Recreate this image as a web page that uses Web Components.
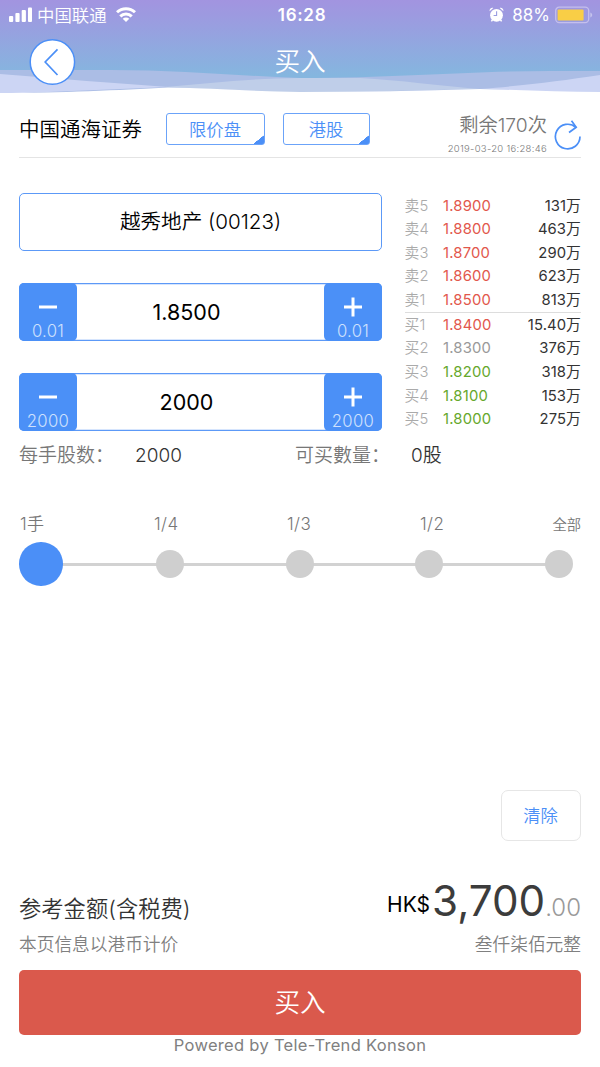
<!DOCTYPE html>
<html lang="zh-CN">
<head>
<meta charset="utf-8">
<meta name="viewport" content="width=device-width, initial-scale=1">
<title>买入</title>
<style>
	body{
		margin: 0;
		background: #fff;
		font-family: Inter, "Noto Sans CJK SC", sans-serif;
		font-weight: 350;
	}
</style>
</head>
<body>
<trade-app></trade-app>

<template id="status_bar_tpl">
	<style>
		:host{
			display: grid;
			grid-template-columns: 1fr auto 1fr;
			align-items: center;
			height: 30px;
			padding: 0 7px 0 9px;
			color: #fff;
			font-size: 17px;
			line-height: 30px;
			box-sizing: border-box;
		}
		.side{
			display: flex;
			align-items: center;
			height: 30px;
		}
		.right{
			justify-content: flex-end;
		}
		.carrier{
			margin: 1px 9px 0 5px;
			font-size: 17.4px;
		}
		.time{
			font-weight: 600;
			letter-spacing: .7px;
			margin-left: 2px;
		}
		.level{
			margin: 0 5px 0 8px;
			font-weight: 400;
		}
		svg{
			display: block;
		}
	</style>
	<div class="side">
		<svg width="23" height="16" fill="#fff">
			<rect x="0" y="9" width="4.2" height="6" rx="1"/>
			<rect x="6.4" y="6" width="4.2" height="9" rx="1"/>
			<rect x="12.7" y="3" width="4.2" height="12" rx="1"/>
			<rect x="19" y="0.5" width="4" height="14.5" rx="1"/>
		</svg>
		<span class="carrier">中国联通</span>
		<svg width="20" height="16" fill="none" stroke="#fff" stroke-width="3">
			<path d="M1 5.3C6 0.4 14 0.4 19 5.3"/>
			<path d="M4.3 9.4C7.4 6.2 12.6 6.2 15.7 9.4"/>
			<path d="M10 15L6.7 11.8C8.6 10.1 11.4 10.1 13.3 11.8Z" fill="#fff" stroke="none"/>
		</svg>
	</div>
	<span class="time">16:28</span>
	<div class="side right">
		<svg width="15" height="16">
			<circle cx="7.5" cy="8.3" r="6.4" fill="#fff"/>
			<path d="M0.6 4.2C0.3 1.8 2.2 0.3 4.3 0.9ZM14.4 4.2C14.7 1.8 12.8 0.3 10.7 0.9Z" fill="#fff"/>
			<path d="M3.6 12.6L2.4 14.4M11.4 12.6L12.6 14.4" stroke="#fff" stroke-width="1.5"/>
			<path d="M7.6 4.2V8.5H4.6" stroke="#9a9de0" stroke-width="1.1" fill="none"/>
		</svg>
		<span class="level">88%</span>
		<svg width="38" height="18">
			<rect x="0.7" y="1.2" width="33" height="15.4" rx="3.5" fill="none" stroke="#c5bfed" stroke-width="1.3"/>
			<rect x="2.6" y="3.4" width="26" height="11" rx="1" fill="#f9ce46"/>
			<path d="M35.3 6.5C37.8 7.2 37.8 10.8 35.3 11.5Z" fill="#c5c3ec"/>
		</svg>
	</div>
</template>

<template id="nav_header_tpl">
	<style>
		:host{
			display: block;
			height: 94px;
			position: relative;
			background: linear-gradient(#a294e0 0, #9b9ce0 20px, #85b6df 76px);
		}
		.waves{
			position: absolute;
			left: 0;
			top: 0;
		}
		.bar{
			display: grid;
			grid-template-columns: 46px 1fr 46px;
			align-items: center;
			height: 46px;
			margin-top: 8px;
			padding: 0 29px;
			position: relative;
		}
		status-bar{
			position: relative;
		}
		.back{
			display: block;
		}
		h1{
			margin: 0;
			color: #fff;
			text-align: center;
			font-size: 25.6px;
			font-weight: 350;
			line-height: 48px;
		}
	</style>
	<svg class="waves" width="600" height="94">
		<path d="M0 70H110C180 70 240 76 300 78C380 80 430 86 480 89L600 93V94H0Z" fill="#abbde5"/>
		<path d="M600 71H550C470 71 400 78 300 78C250 79 210 83 165 87L0 93V94H600Z" fill="#abbde5"/>
		<path d="M165 87C210 83 250 78.5 300 78H360C400 80 440 86 480 89L300 93Z" fill="#bfcee9"/>
		<path d="M0 74C60 79 115 83 168 87L0 94Z" fill="#ccd5f4"/>
		<path d="M600 75C560 81 530 85 480 89L600 94Z" fill="#ccd5f4"/>
		<path d="M0 93C60 93 120 90 168 87.5C210 88 255 91.5 300 92C360 92 420 91 480 89C520 90 560 92 600 92V94H0Z" fill="#fff"/>
	</svg>
	<status-bar></status-bar>
	<div class="bar">
		<svg class="back" width="47" height="46" fill="none" stroke="#4b8ff7">
			<circle cx="23.4" cy="23" r="22.2" fill="#fff" stroke-width="1.5"/>
			<path d="M28.5 10.3L16.2 23L28.5 36" stroke-width="1.7"/>
		</svg>
		<h1><slot></slot></h1>
	</div>
</template>

<template id="select_box_tpl">
	<style>
		:host{
			display: block;
			height: 32px;
			border: 1px solid #6ba3f9;
			border-radius: 3px;
			box-sizing: border-box;
			padding-right: 1px;
			color: #4b8ff7;
			background: linear-gradient(141deg, transparent 50%, #4b8ff7 52%) right bottom / 11px 9px no-repeat;
			font-size: 17.3px;
			line-height: 32px;
			text-align: center;
		}
	</style>
	<slot></slot>
</template>

<template id="step_input_tpl">
	<style>
		:host{
			display: grid;
			grid-template-columns: 58px 1fr 58px;
			height: 58px;
			border-radius: 5px;
			box-shadow: inset 0 0 0 1.3px #5c99f7;
		}
		.btn{
			display: flex;
			flex-direction: column;
			align-items: center;
			justify-content: flex-end;
			border-radius: 5px;
			background: #4b90f7;
			color: #cfe1fd;
			font-size: 16.7px;
			line-height: 18px;
			letter-spacing: .3px;
			padding-bottom: 1px;
			box-sizing: border-box;
		}
		svg{
			margin-bottom: 5px;
		}
		.value{
			padding-right: 28px;
			font-size: 21.5px;
			font-weight: 370;
			line-height: 58px;
			text-align: center;
			color: #000;
		}
	</style>
	<div class="btn">
		<svg width="20" height="20"><path d="M1 10H19" stroke="#fff" stroke-width="3"/></svg>
		<span class="step"></span>
	</div>
	<div class="value"><slot></slot></div>
	<div class="btn">
		<svg width="20" height="20"><path d="M1 10H19M10 0.5V19.5" stroke="#fff" stroke-width="3"/></svg>
		<span class="step"></span>
	</div>
</template>

<template id="quote_row_tpl">
	<style>
		:host{
			display: grid;
			grid-template-columns: 38.5px 1fr auto;
			height: 23.6px;
			line-height: 23.6px;
			font-size: 14.8px;
			color: #e2574c;
		}
		:host([trend="flat"]){ color: #999; }
		:host([trend="down"]){ color: #66a82c; }
		.label{ color: #aaa; }
		.price{ font-weight: 380; }
		.label, .price{ letter-spacing: .2px; }
		.amount{
			color: #333;
			font-weight: 370;
			letter-spacing: .1px;
		}
	</style>
	<span class="label"></span>
	<span class="price"></span>
	<span class="amount"></span>
</template>

<template id="lot_slider_tpl">
	<style>
		:host{
			display: block;
		}
		.labels{
			display: grid;
			grid-template-columns: 134px 133px 133px 1fr auto;
			align-items: center;
			height: 24px;
			padding-left: 1px;
			color: #777;
			font-size: 17px;
			letter-spacing: .4px;
			line-height: 24px;
		}
		.labels :last-child{
			font-size: 14.3px;
			letter-spacing: 0;
			padding-top: 2px;
		}
		.track{
			display: flex;
			align-items: center;
			justify-content: space-between;
			height: 44px;
			margin-top: 7px;
			padding-right: 8px;
			background: linear-gradient(#d2d2d2, #d2d2d2) 20px 50% / 520px 3px no-repeat;
		}
		.dot{
			width: 28px;
			height: 28px;
			border-radius: 50%;
			background: #cfcfcf;
		}
		.dot.on{
			width: 43.5px;
			height: 43.5px;
			margin-right: -8px;
			background: #4b8ff7;
		}
	</style>
	<div class="labels"></div>
	<div class="track"></div>
</template>

<template id="trade_app_tpl">
	<style>
		:host{
			display: block;
			width: 600px;
			height: 1067px;
			overflow: hidden;
		}
		main{
			padding: 0 19px;
		}
		.account{
			display: flex;
			align-items: flex-start;
			height: 64px;
			border-bottom: 1px solid #e4e4e4;
			box-sizing: border-box;
		}
		.broker{
			width: 147px;
			font-size: 20.5px;
			line-height: 32px;
			margin-top: 20px;
			color: #000;
		}
		select-box{
			margin-top: 19px;
		}
		.remain{
			margin-left: auto;
			margin-top: 18px;
			text-align: right;
			color: #777;
			line-height: 26px;
			font-size: 19.3px;
		}
		.date{
			font-size: 9.5px;
			line-height: 12px;
			margin-top: 5px;
			letter-spacing: .3px;
		}
		.reload{
			margin: 24px 0 0 7px;
		}
		.order{
			display: grid;
			grid-template-columns: 363px 176.5px;
			justify-content: space-between;
			height: 238px;
			margin-top: 35px;
		}
		.stock{
			height: 58px;
			border: 1.3px solid #5c99f7;
			border-radius: 5px;
			box-sizing: border-box;
			font-size: 20.6px;
			line-height: 56px;
			text-align: center;
			color: #000;
		}
		step-input{
			margin-top: 32px;
		}
		.book{
			padding-top: 1px;
		}
		.sell{
			padding-top: .6px;
			border-bottom: 1px solid #ddd;
			height: 117px;
		}
		.buy{
			padding-top: 1.2px;
		}
		.lots{
			display: grid;
			grid-template-columns: 116px 160px 116px auto;
			justify-content: start;
			height: 30px;
			color: #777;
			font-size: 19px;
			line-height: 30px;
			margin-top: 10px;
		}
		.lots b{
			color: #333;
			font-weight: 350;
		}
		lot-slider{
			margin-top: 40px;
		}
		.clear{
			display: block;
			width: 80px;
			height: 51px;
			margin: 204px 0 0 auto;
			border: 1px solid #e6e6e6;
			border-radius: 7px;
			box-sizing: border-box;
			padding-right: 1px;
			color: #4b8ff7;
			font-size: 17.3px;
			line-height: 50px;
			text-align: center;
		}
		.total{
			display: flex;
			justify-content: space-between;
			align-items: baseline;
			height: 56px;
			margin-top: 32px;
			line-height: 56px;
		}
		.caption{
			font-size: 22.3px;
			color: #333;
			position: relative;
			top: 1px;
		}
		.sum{
			display: flex;
			align-items: baseline;
			color: #3c3c3c;
			font-size: 42.2px;
			font-weight: 380;
		}
		.cur{
			font-size: 21px;
			color: #000;
			margin-right: 2px;
			position: relative;
			top: -4px;
		}
		.cents{
			font-size: 24px;
			color: #999;
			font-weight: 320;
		}
		.notes{
			display: flex;
			justify-content: space-between;
			margin-top: 3px;
			color: #808080;
			font-size: 17.7px;
			line-height: 26px;
		}
		.submit{
			height: 65px;
			margin-top: 12px;
			border-radius: 5px;
			background: #da594c;
			color: #fff;
			font-size: 25.6px;
			line-height: 65px;
			text-align: center;
		}
		footer{
			color: #808080;
			font-size: 16.5px;
			font-weight: 400;
			letter-spacing: .3px;
			line-height: 20px;
			text-align: center;
		}
	</style>
	<nav-header>买入</nav-header>
	<main>
		<div class="account">
			<div class="broker">中国通海证券</div>
			<select-box style="width:99px">限价盘</select-box>
			<select-box style="width:87px;margin-left:18px">港股</select-box>
			<div class="remain">
				<div>剩余170次</div>
				<div class="date">2019-03-20 16:28:46</div>
			</div>
			<svg class="reload" width="27" height="33" fill="none" stroke="#4b8ff7" stroke-width="1.7">
				<path d="M26 18.5A12.3 12.3 0 1 1 22 9.5"/>
				<path d="M17.5 2.8L22.2 9.3L15 14.5"/>
			</svg>
		</div>
		<div class="order">
			<div>
				<div class="stock">越秀地产 (00123)</div>
				<step-input step="0.01">1.8500</step-input>
				<step-input step="2000">2000</step-input>
			</div>
			<div class="book">
				<div class="sell">
					<quote-row label="卖5" price="1.8900" amount="131万"></quote-row>
					<quote-row label="卖4" price="1.8800" amount="463万"></quote-row>
					<quote-row label="卖3" price="1.8700" amount="290万"></quote-row>
					<quote-row label="卖2" price="1.8600" amount="623万"></quote-row>
					<quote-row label="卖1" price="1.8500" amount="813万"></quote-row>
				</div>
				<div class="buy">
					<quote-row label="买1" price="1.8400" amount="15.40万"></quote-row>
					<quote-row label="买2" price="1.8300" amount="376万" trend="flat"></quote-row>
					<quote-row label="买3" price="1.8200" amount="318万" trend="down"></quote-row>
					<quote-row label="买4" price="1.8100" amount="153万" trend="down"></quote-row>
					<quote-row label="买5" price="1.8000" amount="275万" trend="down"></quote-row>
				</div>
			</div>
		</div>
		<div class="lots">
			<span>每手股数：</span><b>2000</b>
			<span>可买數量：</span><b>0股</b>
		</div>
		<lot-slider stops="1手,1/4,1/3,1/2,全部" selected="0"></lot-slider>
		<div class="clear">清除</div>
		<div class="total">
			<span class="caption">参考金额(含税费)</span>
			<div class="sum"><span class="cur">HK$</span><span>3,700</span><span class="cents">.00</span></div>
		</div>
		<div class="notes">
			<span>本页信息以港币计价</span>
			<span>叁仟柒佰元整</span>
		</div>
		<div class="submit">买入</div>
		<footer>Powered by Tele-Trend Konson</footer>
	</main>
</template>

<script>
	(function(){
		'use strict';

		class BaseElement extends HTMLElement {
			constructor(tplId){
				super();
				const shadow = this.attachShadow({mode:'open'});
				const tpl = document.getElementById(tplId);
				shadow.appendChild(document.importNode(tpl.content, true));
			}
		}

		class StatusBar extends BaseElement {
			constructor(){ super('status_bar_tpl'); }
		}

		class NavHeader extends BaseElement {
			constructor(){ super('nav_header_tpl'); }
		}

		class SelectBox extends BaseElement {
			constructor(){ super('select_box_tpl'); }
		}

		class StepInput extends BaseElement {
			constructor(){ super('step_input_tpl'); }

			connectedCallback(){
				this.shadowRoot.querySelectorAll('.step').forEach((el) => {
					el.textContent = this.getAttribute('step');
				});
			}
		}

		class QuoteRow extends BaseElement {
			constructor(){ super('quote_row_tpl'); }

			connectedCallback(){
				['label', 'price', 'amount'].forEach((name) => {
					this.shadowRoot.querySelector('.' + name).textContent = this.getAttribute(name);
				});
			}
		}

		class LotSlider extends BaseElement {
			constructor(){ super('lot_slider_tpl'); }

			connectedCallback(){
				const labels = this.shadowRoot.querySelector('.labels');
				const track = this.shadowRoot.querySelector('.track');
				const selected = Number(this.getAttribute('selected'));

				this.getAttribute('stops').split(',').forEach((text, i) => {
					const label = document.createElement('span');
					label.textContent = text;
					labels.appendChild(label);

					const dot = document.createElement('div');
					dot.className = i === selected ? 'dot on' : 'dot';
					track.appendChild(dot);
				});
			}
		}

		class TradeApp extends BaseElement {
			constructor(){ super('trade_app_tpl'); }
		}

		customElements.define('status-bar', StatusBar);
		customElements.define('nav-header', NavHeader);
		customElements.define('select-box', SelectBox);
		customElements.define('step-input', StepInput);
		customElements.define('quote-row', QuoteRow);
		customElements.define('lot-slider', LotSlider);
		customElements.define('trade-app', TradeApp);
	})();
</script>
</body>
</html>
